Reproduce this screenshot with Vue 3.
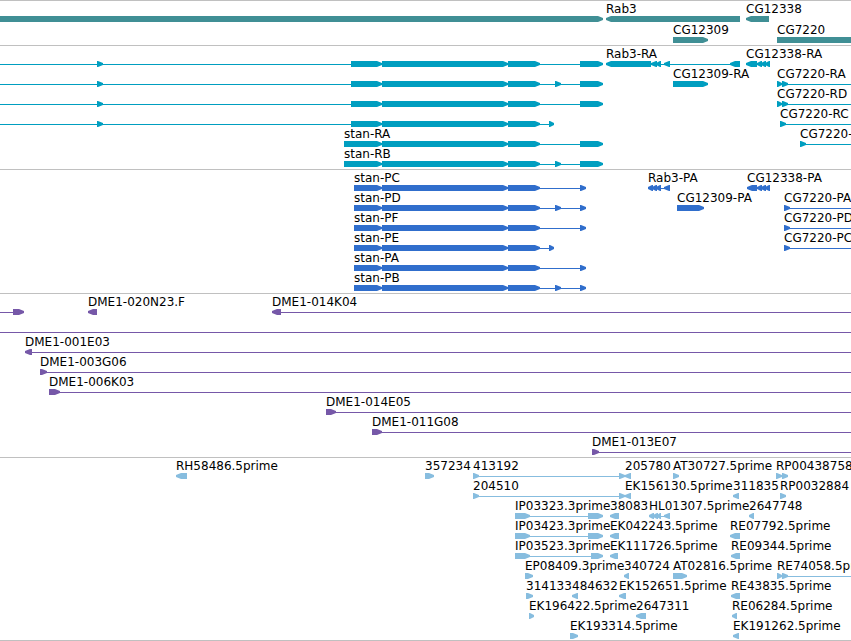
<template>
  <main class="browser">
    <section v-for="track in tracks" :key="track.name" :class="['track', track.name]">
      <div v-for="(row, r) in track.rows" :key="r" class="row">
        <svg class="glyphs">
          <g v-for="(feature, f) in row" :key="f">
            <rect
              v-if="feature.line"
              :x="feature.line[0]"
              y="18"
              :width="feature.line[1] - feature.line[0]"
              height="1"
            />
            <polygon
              v-for="(exon, e) in feature.exons"
              :key="e"
              :points="arrow(exon, feature.strand)"
            />
          </g>
        </svg>
        <span
          v-for="feature in row.filter((item) => item.label)"
          :key="feature.label"
          class="label"
          :style="{ left: feature.start + 'px' }"
        >{{ feature.label }}</span>
      </div>
    </section>
  </main>
</template>

<script setup>
// Anything that runs past the right side of the view ends here and is clipped
const FAR = 4000
const HEAD = 6

// A block with its blunt arrow head on the side the strand points to
function arrow([start, end], strand) {
  const head = Math.min(HEAD, end - start)
  if (strand === '+') {
    return `${start},15 ${end - head + 1},15 ${end},17 ${end},19 ${end - head + 1},21 ${start},21`
  }
  return `${end},15 ${start + head - 1},15 ${start},17 ${start},19 ${start + head - 1},21 ${end},21`
}

function feature(label, strand, exons, lineStart, lineEnd) {
  const start = exons.length ? exons[0][0] : 0
  const end = exons.length ? exons[exons.length - 1][1] : FAR
  const from = lineStart ?? start
  const to = lineEnd ?? end
  const spliced = exons.length !== 1 || from !== start || to !== end
  return { label, strand, exons, start, line: spliced ? [from, to] : null }
}

const stan = [[382, 508], [508, 540]]
const stanLong = [[97, 103], [351, 382], ...stan]
const cg12338Tail = [[757, 762], [761, 766], [765, 770]]

const tracks = [
  {
    name: 'genes',
    rows: [
      [
        feature('', '+', [[0, 603]]),
        feature('Rab3', '-', [[606, 740]]),
        feature('CG12338', '-', [[746, 769]])
      ],
      [
        feature('CG12309', '+', [[673, 708]]),
        feature('CG7220', '+', [[777, FAR]])
      ]
    ]
  },
  {
    name: 'transcripts',
    rows: [
      [
        feature('', '+', [...stanLong, [580, 603]], 0),
        feature('Rab3-RA', '-', [[606, 651], [651, 657], [656, 661], [664, 670], [730, 740]]),
        feature('CG12338-RA', '-', [[746, 757], ...cg12338Tail])
      ],
      [
        feature('', '+', [...stanLong, [555, 561], [580, 603]], 0),
        feature('CG12309-RA', '+', [[673, 708]]),
        feature('CG7220-RA', '+', [[777, 782], [782, 788]], 777, FAR)
      ],
      [
        feature('', '+', [...stanLong, [580, 603]], 0),
        feature('CG7220-RD', '+', [[777, 782], [782, 788]], 777, FAR)
      ],
      [
        feature('', '+', [...stanLong, [549, 554]], 0),
        feature('CG7220-RC', '+', [[780, 786]], 780, FAR)
      ],
      [
        feature('stan-RA', '+', [[344, 382], ...stan, [580, 603]]),
        feature('CG7220-RB', '+', [[800, 806]], 800, FAR)
      ],
      [feature('stan-RB', '+', [[344, 382], ...stan, [555, 561], [580, 603]])]
    ]
  },
  {
    name: 'proteins',
    rows: [
      [
        feature('stan-PC', '+', [[354, 382], ...stan, [580, 586]]),
        feature('Rab3-PA', '-', [[648, 653], [652, 657], [656, 661], [664, 670]]),
        feature('CG12338-PA', '-', [[747, 757], ...cg12338Tail])
      ],
      [
        feature('stan-PD', '+', [[354, 382], ...stan, [555, 561], [580, 586]]),
        feature('CG12309-PA', '+', [[677, 704]]),
        feature('CG7220-PA', '+', [[784, 790]], 784, FAR)
      ],
      [
        feature('stan-PF', '+', [[354, 382], ...stan, [580, 586]]),
        feature('CG7220-PD', '+', [[784, 790]], 784, FAR)
      ],
      [
        feature('stan-PE', '+', [[354, 382], ...stan, [549, 554]]),
        feature('CG7220-PC', '+', [[784, 790]], 784, FAR)
      ],
      [feature('stan-PA', '+', [[354, 382], ...stan, [580, 586]])],
      [feature('stan-PB', '+', [[354, 382], ...stan, [555, 561], [580, 586]])]
    ]
  },
  {
    name: 'clones',
    rows: [
      [
        feature('', '+', [[13, 24]], 0),
        feature('DME1-020N23.F', '-', [[88, 97]]),
        feature('DME1-014K04', '-', [[272, 281]], 272, FAR)
      ],
      [feature('', '+', [])],
      [feature('DME1-001E03', '-', [[25, 32]], 25, FAR)],
      [feature('DME1-003G06', '+', [[40, 47]], 40, FAR)],
      [feature('DME1-006K03', '+', [[49, 60]], 49, FAR)],
      [feature('DME1-014E05', '+', [[326, 336]], 326, FAR)],
      [feature('DME1-011G08', '+', [[372, 382]], 372, FAR)],
      [feature('DME1-013E07', '+', [[592, 599]], 592, FAR)]
    ]
  },
  {
    name: 'ests',
    rows: [
      [
        feature('RH58486.5prime', '-', [[176, 187]]),
        feature('357234', '+', [[425, 434]]),
        feature('413192', '+', [[473, 479], [619, 625]]),
        feature('205780', '-', [[625, 631]]),
        feature('AT30727.5prime', '+', [[673, 679]]),
        feature('RP00438758', '+', [[776, 782], [782, 788]])
      ],
      [
        feature('204510', '+', [[473, 479], [619, 625]]),
        feature('EK156130.5prime', '-', [[625, 631]]),
        feature('311835', '-', [[733, 739]]),
        feature('RP0032884', '+', [[780, 786]])
      ],
      [
        feature('IP03323.3prime', '+', [[515, 530], [588, 603]]),
        feature('38083', '-', [[610, 619]]),
        feature('HL01307.5prime', '-', [[649, 654], [653, 658], [657, 661], [664, 670]]),
        feature('2647748', '-', [[749, 754]])
      ],
      [
        feature('IP03423.3prime', '+', [[515, 530], [588, 603]]),
        feature('EK042243.5prime', '-', [[610, 619]]),
        feature('RE07792.5prime', '-', [[730, 740]])
      ],
      [
        feature('IP03523.3prime', '+', [[515, 530], [591, 603]]),
        feature('EK111726.5prime', '-', [[610, 618]]),
        feature('RE09344.5prime', '-', [[731, 740]])
      ],
      [
        feature('EP08409.3prime', '+', [[525, 533]]),
        feature('340724', '-', [[624, 629]]),
        feature('AT02816.5prime', '+', [[673, 687]]),
        feature('RE74058.5prime', '+', [[777, 782], [782, 788]], 777, FAR)
      ],
      [
        feature('314133', '+', [[526, 533]]),
        feature('484632', '-', [[572, 578]]),
        feature('EK152651.5prime', '-', [[619, 626]]),
        feature('RE43835.5prime', '-', [[731, 740]])
      ],
      [
        feature('EK196422.5prime', '+', [[529, 534]]),
        feature('2647311', '-', [[636, 646]]),
        feature('RE06284.5prime', '-', [[732, 737]])
      ],
      [
        feature('EK193314.5prime', '+', [[570, 578]]),
        feature('EK191262.5prime', '-', [[733, 739]])
      ]
    ]
  }
]
</script>

<style>
body {
  margin: 0;
  background: #fff;
}
</style>

<style scoped>
.browser {
  overflow: hidden;
  border-bottom: 1px solid #c0c0c0;
  font-family: "DejaVu Sans", sans-serif;
  font-size: 12px;
  line-height: 16px;
  color: #000;
}

.track {
  padding-bottom: 3px;
  border-top: 1px solid #c0c0c0;
}

.track:first-child,
.track:last-child {
  padding-bottom: 2px;
}

.row {
  position: relative;
  height: 20px;
}

.genes .row {
  height: 21px;
}

.glyphs {
  display: block;
  width: 100%;
  height: 21px;
}

/* Labels sit at the genomic start of their feature */
.label {
  position: absolute;
  top: 0;
  white-space: nowrap;
}

.genes { fill: #408f95; }
.transcripts { fill: #009ec0; }
.proteins { fill: #306ecc; }
.clones { fill: #7658a8; }
.ests { fill: #87bddf; }
</style>
